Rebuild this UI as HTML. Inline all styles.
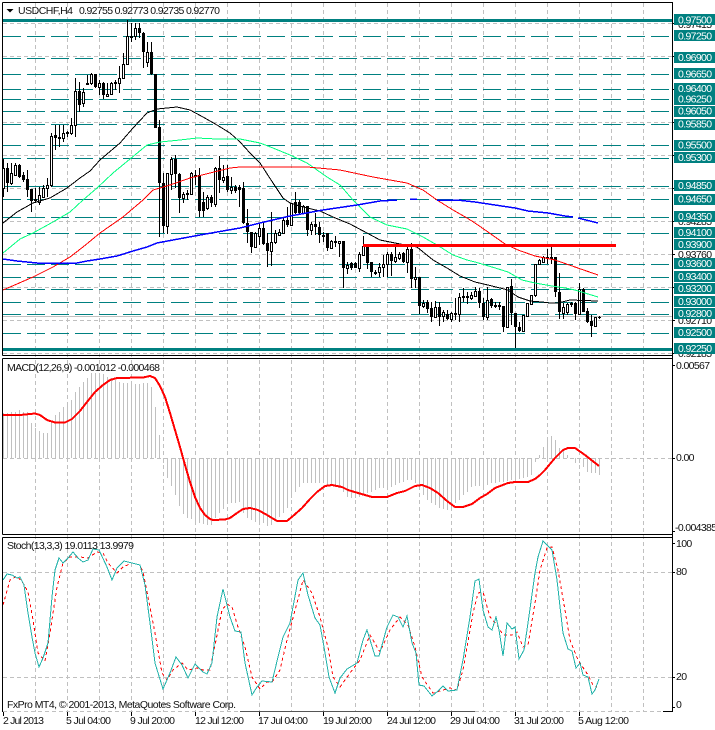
<!DOCTYPE html>
<html>
<head>
<meta charset="utf-8">
<style>
html,body{margin:0;padding:0;background:#fff;width:715px;height:730px;overflow:hidden}
svg{display:block}
text{font-family:"Liberation Sans",sans-serif;font-size:10.5px;fill:#111}
.l text{fill:#fff;letter-spacing:-.65px}
.a text{letter-spacing:-.65px}
</style>
</head>
<body>
<svg width="715" height="730" viewBox="0 0 715 730" xmlns="http://www.w3.org/2000/svg">
<rect width="715" height="730" fill="#fff"/>
<!-- grid -->
<path fill="none" stroke="#c0c0c0" stroke-dasharray="4 3" shape-rendering="crispEdges" d="M35.5 3V712M67.5 3V712M99.5 3V712M131.5 3V712M163.5 3V712M195.5 3V712M227.5 3V712M259.5 3V712M291.5 3V712M323.5 3V712M355.5 3V712M387.5 3V712M419.5 3V712M451.5 3V712M483.5 3V712M515.5 3V712M547.5 3V712M579.5 3V712M611.5 3V712M643.5 3V712M3 23.5H672M3 56.5H672M3 122.5H672M3 155.5H672M3 188.5H672M3 221.5H672M3 254.5H672M3 287.5H672M3 320.5H672M3 353.5H672M3 458.5H672M3 572.5H672M3 677.5H672M3 711.5H240M475 711.5H663"/>
<path stroke="#c0c0c0" d="M3 316.5H672" shape-rendering="crispEdges"/>
<path stroke="#555" d="M240 711.5H475" shape-rendering="crispEdges"/>
<path stroke="#000" d="M663 711.5H672" shape-rendering="crispEdges"/>
<!-- teal lines -->
<path fill="none" stroke="#008080" stroke-dasharray="18 6" shape-rendering="crispEdges" d="M3 36.5H672M3 58.5H672M3 74.5H672M3 89.5H672M3 99.5H672M3 111.5H672M3 124.5H672M3 145.5H672M3 158.5H672M3 186.5H672M3 199.5H672M3 217.5H672M3 233.5H672M3 264.5H672M3 277.5H672M3 289.5H672M3 302.5H672M3 314.5H672M3 333.5H672"/>
<rect x="3" y="19" width="669" height="3" fill="#008080"/>
<rect x="3" y="348" width="669" height="3" fill="#008080"/>
<!-- wicks -->
<path fill="none" stroke="#000" shape-rendering="crispEdges" d="M3.5 159V197M7.5 163V192M11.5 163V185M15.5 163V176M19.5 164V178M23.5 172V182M27.5 170V197M31.5 189V212M35.5 188V203M39.5 187V205M43.5 185V198M47.5 178V197M51.5 133V187M55.5 125V150M59.5 125V147M63.5 125V142M67.5 131V137M71.5 118V135M75.5 78V137M79.5 82V112M83.5 88V107M87.5 75V85M91.5 73V85M95.5 74V88M99.5 80V95M103.5 82V99M107.5 83V97M111.5 82V95M115.5 80V90M119.5 66V93M123.5 53V78M127.5 20V65M131.5 23V42M135.5 23V40M139.5 23V38M143.5 32V68M147.5 42V67M151.5 42V75M155.5 74V128M159.5 120V237M163.5 173V233M167.5 173V234M171.5 157V190M175.5 155V188M179.5 173V213M183.5 192V203M187.5 190V200M191.5 172V195M195.5 170V185M199.5 168V217M203.5 192V217M207.5 195V210M211.5 195V207M215.5 167V207M219.5 156V193M223.5 165V183M227.5 165V192M231.5 177V194M235.5 185V193M239.5 185V207M243.5 182V224M247.5 209V243M251.5 232V253M255.5 232V247M259.5 223V245M263.5 222V245M267.5 233V267M271.5 212V266M275.5 230V244M279.5 229V236M283.5 218V234M287.5 207V227M291.5 203V226M295.5 192V214M299.5 200V215M303.5 205V214M307.5 206V236M311.5 222V235M315.5 213V235M319.5 222V243M323.5 232V242M327.5 233V251M331.5 240V249M335.5 236V247M339.5 241V257M343.5 241V288M347.5 262V274M351.5 262V270M355.5 262V268M359.5 252V272M363.5 236V256M367.5 245V269M371.5 262V277M375.5 270V275M379.5 263V277M383.5 255V277M387.5 252V277M391.5 252V276M395.5 247V263M399.5 252V260M403.5 252V263M407.5 247V273M411.5 243V288M415.5 267V288M419.5 277V314M423.5 300V308M427.5 300V313M431.5 302V322M435.5 301V317M439.5 302V326M443.5 310V322M447.5 310V320M451.5 312V322M455.5 298V320M459.5 293V322M463.5 288V302M467.5 292V304M471.5 292V300M475.5 287V297M479.5 288V308M483.5 298V320M487.5 287V320M491.5 298V308M495.5 302V308M499.5 302V310M503.5 306V332M507.5 287V327M511.5 279V325M515.5 313V348M519.5 322V332M523.5 315V331M527.5 303V317M531.5 295V305M535.5 264V297M539.5 259V265M543.5 256V263M547.5 249V264M551.5 246V264M555.5 257V297M559.5 273V319M563.5 303V319M567.5 303V315M571.5 302V307M575.5 302V320M579.5 283V315M583.5 288V312M587.5 308V323M591.5 315V337M595.5 317V327M599.5 316V319"/>
<!-- bear bodies -->
<path fill="none" stroke="#000" stroke-width="3" shape-rendering="crispEdges" d="M7.5 168V183M19.5 165V177M23.5 175V180M27.5 179V190M31.5 189V201M35.5 199V201M55.5 135V138M67.5 132V134M79.5 91V105M87.5 83V85M95.5 74V87M103.5 83V95M115.5 82V84M131.5 36V38M139.5 28V33M143.5 33V52M151.5 52V74M155.5 74V128M159.5 127V183M163.5 183V226M175.5 159V174M179.5 174V198M187.5 193V195M195.5 175V177M199.5 175V211M203.5 202V211M211.5 197V203M219.5 168V180M227.5 176V190M235.5 187V191M239.5 187V190M243.5 188V223M247.5 223V232M251.5 232V247M263.5 228V244M267.5 243V251M287.5 220V225M295.5 202V213M299.5 202V213M307.5 206V230M315.5 224V227M319.5 227V235M323.5 235V237M327.5 233V248M335.5 241V243M343.5 241V268M351.5 263V268M355.5 263V268M367.5 246V263M371.5 262V272M375.5 272V274M391.5 254V261M403.5 253V262M411.5 249V279M419.5 277V306M427.5 302V309M431.5 308V317M439.5 307V317M447.5 314V319M455.5 313V315M463.5 296V298M467.5 296V298M479.5 291V303M483.5 303V317M491.5 299V306M495.5 305V307M499.5 305V307M503.5 306V327M511.5 286V313M515.5 313V327M519.5 327V331M547.5 257V259M551.5 257V259M555.5 257V292M559.5 292V312M571.5 303V305M575.5 303V314M583.5 289V312M587.5 311V322M591.5 321V326M599.5 317V318"/>
<!-- bull bodies -->
<path fill="#fff" stroke="#000" shape-rendering="crispEdges" d="M2.5 168.5h2V188.5h-2zM10.5 173.5h2V183.5h-2zM14.5 165.5h2V175.5h-2zM38.5 195.5h2V202.5h-2zM42.5 188.5h2V197.5h-2zM46.5 185.5h2V188.5h-2zM50.5 136.5h2V185.5h-2zM58.5 137.5h2V138.5h-2zM62.5 133.5h2V138.5h-2zM70.5 125.5h2V133.5h-2zM74.5 91.5h2V125.5h-2zM82.5 92.5h2V103.5h-2zM90.5 74.5h2V83.5h-2zM98.5 83.5h2V87.5h-2zM106.5 94.5h2V96.5h-2zM110.5 83.5h2V94.5h-2zM118.5 78.5h2V83.5h-2zM122.5 64.5h2V78.5h-2zM126.5 36.5h2V64.5h-2zM134.5 28.5h2V36.5h-2zM146.5 52.5h2V62.5h-2zM166.5 173.5h2V226.5h-2zM170.5 159.5h2V174.5h-2zM182.5 194.5h2V198.5h-2zM190.5 173.5h2V194.5h-2zM206.5 197.5h2V208.5h-2zM214.5 168.5h2V204.5h-2zM222.5 177.5h2V180.5h-2zM230.5 187.5h2V190.5h-2zM254.5 233.5h2V247.5h-2zM258.5 228.5h2V236.5h-2zM270.5 242.5h2V251.5h-2zM274.5 233.5h2V242.5h-2zM278.5 232.5h2V235.5h-2zM282.5 220.5h2V233.5h-2zM290.5 203.5h2V225.5h-2zM302.5 206.5h2V213.5h-2zM310.5 224.5h2V230.5h-2zM330.5 241.5h2V248.5h-2zM338.5 241.5h2V243.5h-2zM346.5 265.5h2V268.5h-2zM358.5 254.5h2V268.5h-2zM362.5 246.5h2V255.5h-2zM378.5 267.5h2V272.5h-2zM382.5 264.5h2V267.5h-2zM386.5 254.5h2V264.5h-2zM394.5 257.5h2V261.5h-2zM398.5 254.5h2V258.5h-2zM406.5 249.5h2V262.5h-2zM414.5 277.5h2V279.5h-2zM422.5 303.5h2V306.5h-2zM434.5 307.5h2V317.5h-2zM442.5 312.5h2V316.5h-2zM450.5 313.5h2V319.5h-2zM458.5 297.5h2V314.5h-2zM470.5 295.5h2V298.5h-2zM474.5 291.5h2V296.5h-2zM486.5 300.5h2V317.5h-2zM506.5 287.5h2V327.5h-2zM522.5 315.5h2V331.5h-2zM526.5 303.5h2V316.5h-2zM530.5 295.5h2V304.5h-2zM534.5 264.5h2V295.5h-2zM538.5 260.5h2V264.5h-2zM542.5 257.5h2V262.5h-2zM562.5 307.5h2V313.5h-2zM566.5 304.5h2V312.5h-2zM578.5 289.5h2V314.5h-2zM594.5 317.5h2V326.5h-2z"/>
<!-- moving averages -->
<polyline fill="none" stroke="#000" stroke-width="1" shape-rendering="crispEdges" points="3,223 17,212 33,203 50,198 67,188 80,178 90,171 100,160 120,143 133,128 147,113 157,109 177,107 190,110 203,117 217,125 230,133 240,142 250,153 260,163 273,183 283,198 290,203 303,207 320,211 333,217 350,224 367,233 380,240 400,244 417,247 433,260 447,268 460,276 475,282 492,286 508,290 518,297 530,301 542,302 550,303 558,303 570,300 598,301"/>
<polyline fill="none" stroke="#00ff7f" stroke-width="1" shape-rendering="crispEdges" points="3,253 20,239 33,233 53,222 70,212 83,200 97,188 113,173 130,159 147,145 160,142 180,140 197,138 217,139 240,139 260,143 273,148 290,155 307,163 327,177 340,185 353,200 370,217 387,225 407,229 423,237 437,245 453,255 467,260 475,262 492,267 508,272 522,280 535,283 552,286 565,288 575,290 598,297"/>
<polyline fill="none" stroke="#f00" stroke-width="1" shape-rendering="crispEdges" points="3,290 17,284 33,277 53,267 70,257 83,247 100,233 123,217 143,200 153,190 170,185 190,178 210,173 230,168 240,167 273,167 307,167 340,170 373,177 407,183 423,190 437,200 453,210 467,218 475,223 488,232 505,244 518,250 535,256 555,260 575,267 598,275"/>
<path fill="none" stroke="#00f" stroke-width="1.5" shape-rendering="crispEdges" d="M3 259L17 261 37 263 57 263 77 263 87 261 100 259 117 256 133 251 147 247 157 243 173 240 200 235 240 228 260 223 290 216 323 210 357 205 380 201 397 200M410 199L417 199M437 200L457 200 475 202 495 205 515 208 528 211 548 213 565 216 573 217M578 218L598 223"/>
<rect x="363" y="244" width="253" height="3" fill="#f00"/>
<!-- MACD hist -->
<path fill="none" stroke="#c0c0c0" shape-rendering="crispEdges" d="M3.5 458V413M7.5 458V413M11.5 458V412M15.5 458V412M19.5 458V410M23.5 458V412M27.5 458V412M31.5 458V423M35.5 458V428M39.5 458V431M43.5 458V433M47.5 458V433M51.5 458V422M55.5 458V415M59.5 458V412M63.5 458V407M67.5 458V402M71.5 458V400M75.5 458V392M79.5 458V387M83.5 458V382M87.5 458V378M91.5 458V373M95.5 458V373M99.5 458V373M103.5 458V374M107.5 458V377M111.5 458V378M115.5 458V380M119.5 458V382M123.5 458V383M127.5 458V383M131.5 458V383M135.5 458V384M139.5 458V384M143.5 458V383M147.5 458V383M151.5 458V387M155.5 458V407M159.5 458V435M163.5 458V463M167.5 458V478M171.5 458V486M175.5 458V495M179.5 458V506M183.5 458V514M187.5 458V518M191.5 458V519M195.5 458V521M199.5 458V523M203.5 458V524M207.5 458V525M211.5 458V525M215.5 458V518M219.5 458V513M223.5 458V509M227.5 458V504M231.5 458V503M235.5 458V503M239.5 458V502M243.5 458V513M247.5 458V518M251.5 458V520M255.5 458V522M259.5 458V523M263.5 458V523M267.5 458V526M271.5 458V525M275.5 458V520M279.5 458V517M283.5 458V513M287.5 458V508M291.5 458V498M295.5 458V492M299.5 458V487M303.5 458V483M307.5 458V483M311.5 458V483M315.5 458V483M319.5 458V483M323.5 458V483M327.5 458V485M331.5 458V486M335.5 458V487M339.5 458V488M343.5 458V492M347.5 458V497M351.5 458V498M355.5 458V498M359.5 458V497M363.5 458V495M367.5 458V493M371.5 458V492M375.5 458V490M379.5 458V488M383.5 458V488M387.5 458V487M391.5 458V487M395.5 458V485M399.5 458V483M403.5 458V482M407.5 458V480M411.5 458V480M415.5 458V483M419.5 458V490M423.5 458V495M427.5 458V500M431.5 458V503M435.5 458V505M439.5 458V508M443.5 458V509M447.5 458V510M451.5 458V508M455.5 458V503M459.5 458V500M463.5 458V495M467.5 458V492M471.5 458V487M475.5 458V486M479.5 458V486M483.5 458V487M487.5 458V485M491.5 458V483M495.5 458V483M499.5 458V482M503.5 458V482M507.5 458V481M511.5 458V480M515.5 458V479M519.5 458V479M523.5 458V478M527.5 458V477M531.5 458V475M535.5 458V462M539.5 458V455M543.5 458V447M547.5 458V440M551.5 458V436M555.5 458V440M559.5 458V448M563.5 458V451M567.5 458V455M575.5 458V463M579.5 458V463M583.5 458V467M587.5 458V472M591.5 458V473M595.5 458V473M599.5 458V475"/>
<polyline fill="none" stroke="#f00" stroke-width="2" stroke-linejoin="round" shape-rendering="crispEdges" points="3,415 20,415 35,413.5 40,415 47,420 55,422.5 65,422.5 72,419 80,411 87,402 95,392 103,385 110,380 117,378 143,377.5 150,376 155,378 160,386 165,397 170,413 175,430 180,447 185,465 190,482 195,497 200,508 205,515 210,519 213,520 225,519.5 230,518 237,513 243,509 250,508 258,510 267,515 277,521 287,521 293,516 302,508 310,499 317,492 325,486 332,485 342,487 348,490 358,493 372,497 387,497 397,493 405,491 415,486 422,485 430,488 438,493 447,501 455,507 463,507 472,504 480,498 487,494 495,488 508,483 515,482 528,482 535,479 540,475 545,470 550,464 555,458 560,453 563,450 568,448 575,448 585,455 599,466"/>
<!-- Stochastic -->
<polyline fill="none" stroke="#f00" stroke-dasharray="3 3" shape-rendering="crispEdges" points="3,605 10,580 17,576 23,583 28,592 33,620 38,653 45,661 50,633 57,587 63,563 70,557 80,557 88,558 97,552 103,553 108,563 117,573 123,567 132,563 140,565 143,572 148,597 155,633 162,673 167,680 173,670 182,663 188,670 197,668 203,670 210,670 215,645 222,610 227,604 232,607 238,627 245,647 252,677 260,689 267,682 272,682 280,670 287,640 297,603 303,580 312,593 320,617 328,647 333,677 340,687 350,673 360,660 370,635 380,652 390,630 400,617 408,625 415,647 422,677 433,693 450,688 457,690 463,670 473,613 478,593 483,592 490,617 497,625 503,635 512,635 517,632 523,647 528,645 535,603 540,570 547,548 552,547 558,570 565,610 570,640 578,660 588,675 593,685 597,687"/>
<polyline fill="none" stroke="#20b2aa" stroke-width="1" shape-rendering="crispEdges" points="3,580 7,574 12,575 17,578 20,577 24,585 28,613 32,637 35,653 39,667 43,658 48,643 52,597 55,570 59,558 63,563 68,558 73,552 78,558 83,562 88,560 93,549 99,550 107,567 112,580 117,568 124,561 132,563 140,565 145,585 150,623 155,663 163,689 170,673 176,657 182,665 188,678 195,664 203,672 207,674 212,663 217,617 223,589 230,617 235,631 241,632 245,663 252,695 257,687 262,681 272,682 278,657 283,637 290,623 298,580 303,573 308,595 315,618 320,625 324,647 329,677 335,693 340,678 347,669 357,663 363,640 367,630 375,656 379,656 387,627 393,615 398,617 403,627 407,616 412,643 416,653 419,685 424,686 432,696 438,691 443,686 448,691 457,690 463,660 470,617 475,581 479,579 483,610 488,627 492,630 496,617 499,630 503,656 507,623 512,629 515,627 519,659 524,650 528,623 535,573 538,557 543,541 552,550 557,580 563,633 568,649 572,651 576,668 580,663 583,675 588,677 592,694 595,690 599,679"/>
<!-- frames -->
<path fill="none" stroke="#000" shape-rendering="crispEdges" d="M2.5 2.5H672.5V712M2.5 2.5V355.5M2.5 358.5V534.5M2.5 537.5V712M2.5 355.5H672.5M2.5 358.5H672.5M2.5 534.5H672.5M2.5 537.5H672.5M3.5 712V716M67.5 712V716M131.5 712V716M195.5 712V716M259.5 712V716M323.5 712V716M387.5 712V716M451.5 712V716M515.5 712V716M579.5 712V716M672 23.5H675M672 56.5H675M672 89.5H675M672 122.5H675M672 155.5H675M672 188.5H675M672 221.5H675M672 254.5H675M672 287.5H675M672 320.5H675M672 353.5H675M672 365.5H675M672 458.5H675M672 531.5H675M672 543.5H675M672 572.5H675M672 677.5H675M672 707.5H675"/>
<!-- title -->
<path d="M6.5 9h7l-3.5 3.5z" fill="#000"/>
<text x="18" y="14" textLength="55">USDCHF,H4</text>
<text x="79" y="14" textLength="141">0.92755 0.92773 0.92735 0.92770</text>
<text x="7" y="371" textLength="153">MACD(12,26,9) -0.001012 -0.000468</text>
<text x="7" y="549" textLength="127">Stoch(13,3,3) 19.0113 13.9979</text>
<text x="7" y="708" textLength="229">FxPro MT4, © 2001-2013, MetaQuotes Software Corp.</text>
<!-- time axis -->
<text x="3" y="724" textLength="41">2 Jul 2013</text>
<text x="66" y="724" textLength="45">5 Jul 04:00</text>
<text x="130" y="724" textLength="45">9 Jul 20:00</text>
<text x="195" y="724" textLength="49">12 Jul 12:00</text>
<text x="258" y="724" textLength="50">17 Jul 04:00</text>
<text x="323" y="724" textLength="49">19 Jul 20:00</text>
<text x="387" y="724" textLength="49">24 Jul 12:00</text>
<text x="450" y="724" textLength="50">29 Jul 04:00</text>
<text x="514" y="724" textLength="50">31 Jul 20:00</text>
<text x="578" y="724" textLength="51">5 Aug 12:00</text>
<!-- right axis values -->
<g class="a">
<text x="678" y="28">0.97415</text>
<text x="678" y="159">0.95305</text>
<text x="678" y="225">0.94285</text>
<text x="678" y="258">0.93760</text>
<text x="678" y="324">0.92710</text>
<text x="678" y="357">0.92185</text>
<text x="676" y="369">0.00567</text>
<text x="676" y="461">0.00</text>
<text x="675" y="531">-0.004385</text>
<text x="676" y="547">100</text>
<text x="676" y="575">80</text>
<text x="676" y="680">20</text>
<text x="676" y="708">0</text>
</g>
<!-- price labels -->
<g fill="#008080" shape-rendering="crispEdges">
<rect x="674" y="14" width="41" height="11"/><rect x="674" y="30" width="41" height="11"/><rect x="674" y="52" width="41" height="11"/><rect x="674" y="68" width="41" height="11"/><rect x="674" y="83" width="41" height="11"/><rect x="674" y="94" width="41" height="11"/><rect x="674" y="106" width="41" height="11"/><rect x="674" y="119" width="41" height="11"/><rect x="674" y="140" width="41" height="11"/><rect x="674" y="152" width="41" height="11"/><rect x="674" y="180" width="41" height="11"/><rect x="674" y="194" width="41" height="11"/><rect x="674" y="211" width="41" height="11"/><rect x="674" y="227" width="41" height="11"/><rect x="674" y="239" width="41" height="11"/><rect x="674" y="258" width="41" height="11"/><rect x="674" y="271" width="41" height="11"/><rect x="674" y="283" width="41" height="11"/><rect x="674" y="296" width="41" height="11"/><rect x="674" y="308" width="41" height="11"/><rect x="674" y="327" width="41" height="11"/><rect x="674" y="343" width="41" height="11"/>
</g>
<g class="l">
<text x="678" y="23.5">0.97500</text>
<text x="678" y="39.5">0.97250</text>
<text x="678" y="61">0.96900</text>
<text x="678" y="77.5">0.96650</text>
<text x="678" y="92">0.96400</text>
<text x="678" y="102.5">0.96250</text>
<text x="678" y="114.5">0.96050</text>
<text x="678" y="127.5">0.95850</text>
<text x="678" y="148.5">0.95500</text>
<text x="678" y="161">0.95300</text>
<text x="678" y="189">0.94850</text>
<text x="678" y="202.5">0.94650</text>
<text x="678" y="220">0.94350</text>
<text x="678" y="236">0.94100</text>
<text x="678" y="248">0.93900</text>
<text x="678" y="267">0.93600</text>
<text x="678" y="280">0.93400</text>
<text x="678" y="292">0.93200</text>
<text x="678" y="305">0.93000</text>
<text x="678" y="317">0.92800</text>
<text x="678" y="336">0.92500</text>
<text x="678" y="352">0.92250</text>
</g>
</svg>
</body>
</html>
